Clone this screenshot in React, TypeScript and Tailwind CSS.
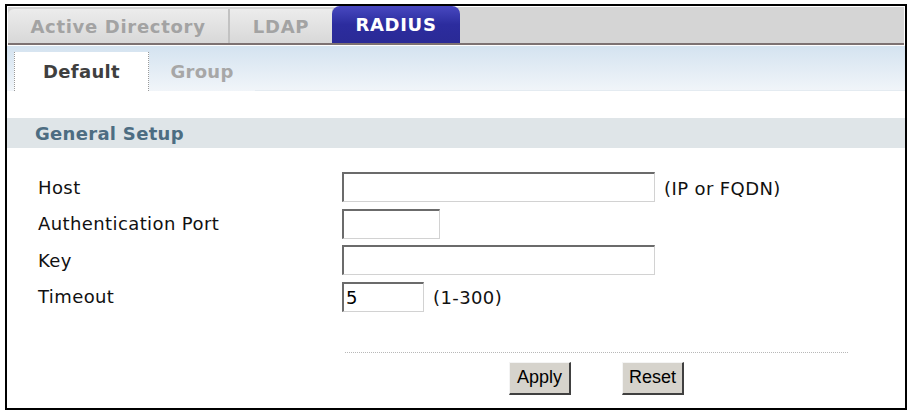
import { useState } from 'react';

const UI_FONT = "font-['DejaVu_Sans',Verdana,sans-serif]";
const BTN_FONT = "font-['Liberation_Sans',Arial,sans-serif]";

function TopTabs() {
    return (
        <div className="flex h-[38px] items-end bg-[#d5d5d5] border-b-2 border-[#7d7272]">
            {/* inactive tabs */}
            <div className="flex h-[34px] w-[222px] items-center justify-center rounded-tl-[6px] bg-gradient-to-b from-[#ececec] to-[#d8d8d8] border-r-2 border-[#c2c2c2]">
                <span className="text-[18px] font-bold tracking-[0.7px] text-[#a3a3a3]">Active Directory</span>
            </div>
            <div className="flex h-[34px] w-[102px] items-center justify-center bg-gradient-to-b from-[#ececec] to-[#d8d8d8]">
                <span className="text-[18px] font-bold tracking-[0.7px] text-[#a3a3a3]">LDAP</span>
            </div>
            {/* active tab */}
            <div className="flex h-[37px] w-[128px] items-center justify-center rounded-t-[8px] bg-gradient-to-b from-[#4848c0] via-[#2c2c9e] to-[#2a2a96]">
                <span className="text-[18px] font-bold tracking-[0.7px] text-white">RADIUS</span>
            </div>
            <div className="flex-1" />
        </div>
    );
}

function SubTabs() {
    return (
        <div className="mt-[1px] flex h-[46px] items-end bg-gradient-to-b from-[#d4e3f0] to-[#f1f5f9] border-b border-[#ffffff]">
            <div className="ml-[7px] flex h-[39px] w-[135px] items-center justify-center bg-white border-l border-r border-dotted border-[#9a9a9a]">
                <span className="text-[18px] font-bold tracking-[0.3px] text-[#3f3f3f]">Default</span>
            </div>
            <div className="flex h-[39px] w-[106px] items-center justify-center">
                <span className="text-[18px] font-bold tracking-[0.3px] text-[#a7a7a7]">Group</span>
            </div>
            <div className="flex-1 self-stretch border-b border-[#e4ebf1]" />
        </div>
    );
}

interface FieldProps {
    label: string;
    width: string;
    value?: string;
    hint?: string;
}

function Field({ label, width, value = '', hint }: FieldProps) {
    const [text, setText] = useState(value);
    return (
        <div className="flex h-[30px] items-center">
            <span className="w-[304px] text-[18px] tracking-[0.4px] text-[#111]">{label}</span>
            <input
                value={text}
                onChange={(e) => setText(e.target.value)}
                className={`${width} h-[30px] bg-white px-[2px] text-[18px] text-black outline-none border-t-2 border-l-2 border-r border-b border-t-[#6b6b6b] border-l-[#6b6b6b] border-r-[#d2d2d2] border-b-[#d2d2d2] ${UI_FONT}`}
            />
            {hint && <span className="ml-[9px] pt-[2px] text-[18px] tracking-[0.4px] text-[#111]">{hint}</span>}
        </div>
    );
}

function Btn({ label }: { label: string }) {
    return (
        <button
            className={`h-[33px] w-[62px] bg-[#d6d3cc] text-[18px] text-black border-t border-l border-r-2 border-b-2 border-t-[#f4f4f4] border-l-[#f4f4f4] border-r-[#404040] border-b-[#404040] ${BTN_FONT}`}
        >
            {label}
        </button>
    );
}

export default function App() {
    return (
        <div className={`h-[412px] w-[909px] bg-white pl-[5px] pt-[4px] ${UI_FONT}`}>
            <div className="flex h-[406px] w-[902px] flex-col border-2 border-black bg-white">
                <div className="pt-[1px] px-[1px]">
                    <TopTabs />
                </div>
                <SubTabs />

                {/* section header */}
                <div className="mt-[26px] flex h-[30px] items-center bg-[#dfe5e8] pl-[28px]">
                    <span className="text-[18px] font-bold tracking-[0.3px] text-[#4d6d82]">General Setup</span>
                </div>

                {/* form */}
                <div className="mt-[24px] flex flex-col gap-[6.5px] pl-[31px]">
                    <Field label="Host" width="w-[313px]" hint="(IP or FQDN)" />
                    <Field label="Authentication Port" width="w-[98px]" />
                    <Field label="Key" width="w-[313px]" />
                    <Field label="Timeout" width="w-[82px]" value="5" hint="(1-300)" />
                </div>

                {/* actions */}
                <div className="ml-[338px] mt-[40px] w-[503px] border-t border-dotted border-[#b8b8b8]" />
                <div className="mt-[9px] flex gap-[51px] pl-[502px]">
                    <Btn label="Apply" />
                    <Btn label="Reset" />
                </div>
            </div>
        </div>
    );
}
